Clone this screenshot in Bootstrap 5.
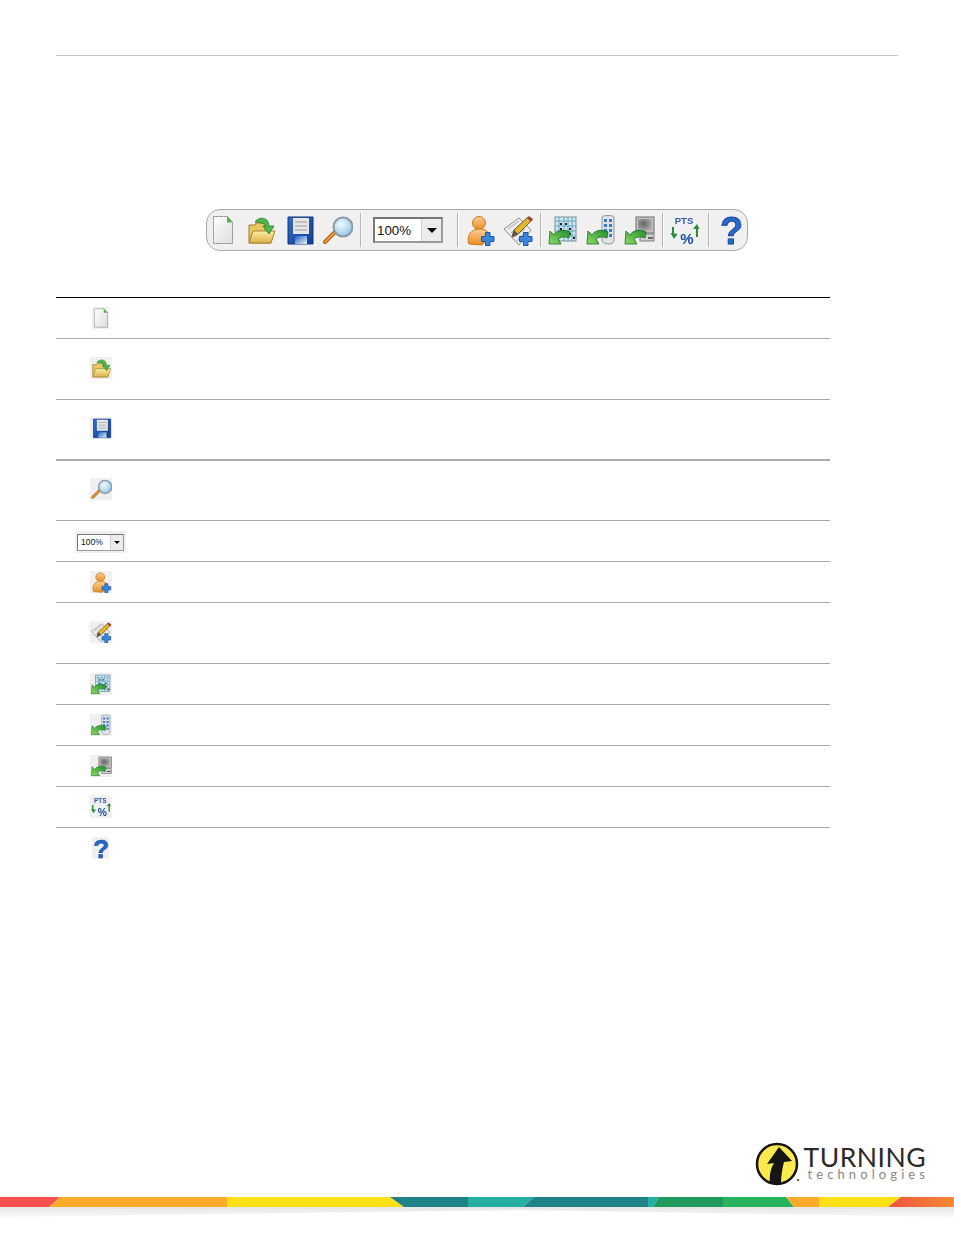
<!DOCTYPE html>
<html lang="en">
  <head>
    <meta charset="UTF-8" />
    <title>Toolbar reference</title>
    <link rel="stylesheet" href="https://cdn.jsdelivr.net/npm/bootstrap@5.3.0/dist/css/bootstrap.min.css" />
    <style>
      body { background: #fff; font-family: "Liberation Sans", Arial, sans-serif; height: 1235px; overflow: hidden; }
      .page-body { padding: 55px 56px 0; }
      .top-rule { height: 1px; background: #c4c4c4; margin: 0 0 153px; }
      .tool-strip { width: 542px; height: 42px; margin: 0 auto 46px 150px; background: #f0f0f0; border: 1px solid #a9a9a9; border-radius: 14px; gap: 6px; }
      .tool-strip svg { width: 32px; height: 32px; flex: none; filter: blur(.3px); }
      .tool-sep { width: 2px; height: 34px; background: #b4b4b4; border-right: 1px solid #fff; flex: none; margin: 0 -1px 0 1px; }
      .tool-sep-tight { margin-left: 0; }
      .zoom-box { display: flex; background: #fff; border: 2px solid #777; border-right-color: #9a9a9a; border-bottom-color: #9a9a9a; color: #111; }
      .zoom-box b { display: flex; align-items: center; justify-content: center; background: #ececec; border-left: 1px solid #d0d0d0; font-weight: 400; }
      .zoom-box b::after { content: ""; border: solid transparent; border-top-color: #000; border-bottom-width: 0; }
      .zoom-big { width: 71px; height: 26px; font-size: 13.3px; line-height: 24px; margin: 0 7px 0 6px; padding-left: 2px; justify-content: space-between; }
      .zoom-big b { width: 20px; }
      .zoom-big b::after { border-width: 5px 5px 0; }
      .zoom-small { width: 47px; height: 17px; font-size: 8.5px; line-height: 15px; padding-left: 3px; justify-content: space-between; border-width: 1px; }
      .zoom-small b { width: 13px; }
      .zoom-small b::after { border-width: 3px 3px 0; }
      .icon-table { width: 774px; margin: 0; border-top: 1px solid #000; }
      .icon-table td { padding: 0; border-bottom: 1px solid #a9a9a9; vertical-align: middle; text-align: center; }
      .icon-table tr:last-child td { border-bottom: 0; }
      .icon-col { width: 89px; }
      .row-s { height: 41px; }
      .row-t { height: 61px; }
      .row-m { height: 60px; }
      .row-thick td { border-bottom-width: 2px; }
      .icon-tile { display: inline-flex; vertical-align: middle; justify-content: center; overflow: hidden; background: #f0f0f0; width: 22px; height: 22px; margin-bottom: 1px; }
      .row-t .icon-tile, .row-m .icon-tile { margin-bottom: 3px; }
      .icon-tile svg { width: 22px; height: 22px; flex: none; filter: blur(.25px); }
      .tile-narrow { width: 17px; }
      .zoom-tile { display: inline-block; vertical-align: middle; background: #f0f0f0; padding: 3px 2px 2px; }
      .foot-area { position: absolute; left: 0; right: 0; bottom: 0; }
      .brand-row { padding-right: 28px; height: 46px; }
      .brand-row svg { filter: blur(.3px); }
      .brand-text { padding-bottom: 4px; }
      .brand-name { font-family: Lato, "Liberation Sans", sans-serif; font-weight: 400; font-size: 26.5px; line-height: 24px; color: #2a2a28; letter-spacing: .5px; }
      .brand-sub { font-family: Lato, "Liberation Sans", sans-serif; font-size: 13px; line-height: 10px; color: #8c8582; letter-spacing: 4.1px; margin-left: 4px; margin-right: -4px; white-space: nowrap; }
      .color-bar { display: block; width: 100%; height: 38px; margin-top: 10px; }
    </style>
  </head>
  <body>
    <svg width="0" height="0" class="position-absolute">
      <defs>
        <linearGradient id="paper" x1="0" y1="0" x2="1" y2="1"><stop offset="0" stop-color="#fff"/><stop offset="1" stop-color="#dcdcdc"/></linearGradient>
        <linearGradient id="tan" x1="0" y1="0" x2="0" y2="1"><stop offset="0" stop-color="#fdeea6"/><stop offset="1" stop-color="#dcb04c"/></linearGradient>
        <linearGradient id="navy" x1="0" y1="0" x2="1" y2="1"><stop offset="0" stop-color="#2f6fc4"/><stop offset="1" stop-color="#123c94"/></linearGradient>
        <linearGradient id="skin" x1="0" y1="0" x2="0" y2="1"><stop offset="0" stop-color="#fbcf96"/><stop offset="1" stop-color="#ec8a1e"/></linearGradient>
        <linearGradient id="leaf" x1="1" y1="0" x2="0" y2="1"><stop offset="0" stop-color="#1f8f2c"/><stop offset="1" stop-color="#8fdc63"/></linearGradient>
        <linearGradient id="shutter" x1="0" y1="0" x2="1" y2="1"><stop offset="0" stop-color="#1d62bd"/><stop offset="1" stop-color="#e8f2fb"/></linearGradient>
        <radialGradient id="screen" cx=".4" cy=".4" r=".7"><stop offset="0" stop-color="#666"/><stop offset="1" stop-color="#b4b4b4"/></radialGradient>
        <radialGradient id="lens" cx=".4" cy=".35" r=".7"><stop offset="0" stop-color="#f2fbff"/><stop offset="1" stop-color="#8cc6e4"/></radialGradient>
        <symbol id="i-green-arrow" viewBox="0 0 32 32">
          <path d="M2 30L3 17l4 4c3-5 10-6 16-3l-1 6c-5-2-9-1-11 1l3 5z" fill="url(#leaf)" stroke="#166b1e" stroke-width=".8"/>
        </symbol>
        <symbol id="i-plus" viewBox="0 0 32 32">
          <path d="M17.500 22.500h4v-4h4.500v4h4v5h-4v4h-4.500v-4h-4z" fill="#3b86dc" stroke="#1b56a6" stroke-width="1"/>
        </symbol>
        <symbol id="i-new" viewBox="0 0 32 32">
          <path d="M6.500 2.500h14l5 6v21h-19z" fill="url(#paper)" stroke="#8d8d8d" stroke-dasharray="2 .5"/>
          <path d="M20 2l6 6.500h-6z" fill="#57b14a"/>
        </symbol>
        <symbol id="i-open" viewBox="0 0 32 32">
          <path d="M4 29V11h6l1-2h9v8h6v12z" fill="#e8c765" stroke="#9f7d26"/>
          <path d="M4 29l4-12h22l-4 12z" fill="url(#tan)" stroke="#a88429"/>
          <path d="M10 8c3-5 11-5 13 0l1 4h5l-5 8-6-8h3c-1-3-7-4-11-4z" fill="#4cb84a" stroke="#1f7f28" stroke-width=".8"/>
        </symbol>
        <symbol id="i-save" viewBox="0 0 32 32">
          <path d="M5 3h25v27H5z" fill="url(#navy)" stroke="#12337f"/>
          <rect x="10" y="4" width="16" height="16" fill="#e6e6e6"/>
          <path d="M12 8h12M12 12h12M12 16h12" stroke="#9a9a9a"/>
          <rect x="12" y="22" width="12" height="8" fill="url(#shutter)"/>
        </symbol>
        <symbol id="i-find" viewBox="0 0 32 32">
          <path d="M4 28l11-11" stroke="#a85b14" stroke-width="4" stroke-linecap="round"/>
          <path d="M4 28l11-11" stroke="#ef9a3a" stroke-width="2" stroke-linecap="round"/>
          <circle cx="22" cy="13" r="9.500" fill="url(#lens)" stroke="#8b98a4" stroke-width="2"/>
        </symbol>
        <symbol id="i-user" viewBox="0 0 32 32">
          <circle cx="15" cy="9" r="6.500" fill="url(#skin)" stroke="#c67a1c"/>
          <path d="M5 30c-3-8 2-15 10-15s11 4 10 8l-7 8z" fill="url(#skin)" stroke="#c67a1c"/>
          <use href="#i-plus"/>
        </symbol>
        <symbol id="i-edit" viewBox="0 0 32 32">
          <path d="M2 15L17 4l12 12-12 15z" fill="#ededed" stroke="#8b8b8b"/>
          <path d="M6 15l11-8M9 19l11-8M12 23l11-8M15 27l8-9" stroke="#a8a8a8"/>
          <path d="M10 23l2-7L26 3l4 3-14 14z" fill="#e3b62d" stroke="#6f5a17"/>
          <path d="M10 23l2-7 4 4z" fill="#555"/>
          <path d="M25 4l2-2 4 3-2 3z" fill="#a2403c"/>
          <use href="#i-plus"/>
        </symbol>
        <symbol id="i-grid" viewBox="0 0 32 32">
          <rect x="8" y="3" width="21" height="24" fill="#cfe4ef" stroke="#7d8d96"/>
          <path d="M8 7h21M8 12h21M8 17h21M8 22h21M12 3v24M17 3v24M21 3v24M25 3v24" stroke="#4d9db8" stroke-width=".8"/>
          <path d="M13 9h2v2h-2zM18 9h2v2h-2zM22 14h2v2h-2zM13 14h2v2h-2zM22 19h2v2h-2zM26 23h2v2h-2z" fill="#222"/>
          <use href="#i-green-arrow"/>
        </symbol>
        <symbol id="i-handheld" viewBox="0 0 32 32">
          <path d="M17 3c0-2 12-2 12 0v24c-1 4-10 4-12 0z" fill="#dfe3e8" stroke="#8f969c"/>
          <path d="M19 5h3v3h-3zM24 5h3v3h-3zM19 10h3v3h-3zM24 10h3v3h-3zM19 15h3v3h-3zM24 15h3v3h-3zM24 20h3v3h-3z" fill="#3a77d0"/>
          <use href="#i-green-arrow"/>
        </symbol>
        <symbol id="i-pc" viewBox="0 0 32 32">
          <rect x="13" y="3" width="18" height="16" fill="#c4c4c4" stroke="#6c6c6c"/>
          <rect x="15" y="5" width="14" height="12" fill="url(#screen)"/>
          <rect x="17" y="20" width="14" height="7" fill="#d2d2d2" stroke="#7d7d7d"/>
          <path d="M25 24h5" stroke="#444" stroke-width="1.500"/>
          <use href="#i-green-arrow"/>
        </symbol>
        <symbol id="i-pts" viewBox="0 0 32 32">
          <text x="15" y="9.500" text-anchor="middle" font-family="Liberation Sans" font-weight="700" font-size="9.500" fill="#2a5aa8">PTS</text>
          <text x="18" y="29.500" text-anchor="middle" font-family="Liberation Sans" font-weight="700" font-size="15" fill="#1b4fa3">%</text>
          <path d="M4 13v8" fill="none" stroke="#2b8d35" stroke-width="2"/>
          <path d="M1.500 19l7 1-3.500 5z" fill="#2b8d35"/>
          <path d="M28 23v-8" fill="none" stroke="#2b8d35" stroke-width="2"/>
          <path d="M24 15l4-5 2.500 5z" fill="#2b8d35"/>
        </symbol>
        <symbol id="i-help" viewBox="0 0 32 32">
          <text x="16.500" y="30" text-anchor="middle" font-family="Liberation Sans" font-weight="700" font-size="38" fill="#2a68c8" stroke="#12409a" stroke-width=".8">?</text>
        </symbol>
      </defs>
    </svg>

    <div class="page-body">
      <div class="top-rule me-0"></div>

      <div class="tool-strip d-flex align-items-center">
        <svg><use href="#i-new"/></svg>
        <svg><use href="#i-open"/></svg>
        <svg><use href="#i-save"/></svg>
        <svg><use href="#i-find"/></svg>
        <span class="tool-sep"></span>
        <div class="zoom-box zoom-big">100%<b></b></div>
        <span class="tool-sep"></span>
        <svg><use href="#i-user"/></svg>
        <svg><use href="#i-edit"/></svg>
        <span class="tool-sep tool-sep-tight"></span>
        <svg><use href="#i-grid"/></svg>
        <svg><use href="#i-handheld"/></svg>
        <svg><use href="#i-pc"/></svg>
        <span class="tool-sep"></span>
        <svg><use href="#i-pts"/></svg>
        <span class="tool-sep"></span>
        <svg><use href="#i-help"/></svg>
      </div>

      <table class="icon-table">
        <tr class="row-s"><td class="icon-col"><span class="icon-tile tile-narrow"><svg><use href="#i-new"/></svg></span></td><td></td></tr>
        <tr class="row-t"><td><span class="icon-tile"><svg><use href="#i-open"/></svg></span></td><td></td></tr>
        <tr class="row-m row-thick"><td><span class="icon-tile"><svg><use href="#i-save"/></svg></span></td><td></td></tr>
        <tr class="row-t"><td><span class="icon-tile"><svg><use href="#i-find"/></svg></span></td><td></td></tr>
        <tr class="row-s"><td><span class="zoom-tile"><div class="zoom-box zoom-small">100%<b></b></div></span></td><td></td></tr>
        <tr class="row-s"><td><span class="icon-tile"><svg><use href="#i-user"/></svg></span></td><td></td></tr>
        <tr class="row-t"><td><span class="icon-tile"><svg><use href="#i-edit"/></svg></span></td><td></td></tr>
        <tr class="row-s"><td><span class="icon-tile"><svg><use href="#i-grid"/></svg></span></td><td></td></tr>
        <tr class="row-s"><td><span class="icon-tile"><svg><use href="#i-handheld"/></svg></span></td><td></td></tr>
        <tr class="row-s"><td><span class="icon-tile"><svg><use href="#i-pc"/></svg></span></td><td></td></tr>
        <tr class="row-s"><td><span class="icon-tile"><svg><use href="#i-pts"/></svg></span></td><td></td></tr>
        <tr class="row-s"><td><span class="icon-tile tile-narrow"><svg><use href="#i-help"/></svg></span></td><td></td></tr>
      </table>
    </div>

    <div class="foot-area">
      <div class="brand-row d-flex justify-content-end align-items-center gap-1">
        <svg width="46" height="46" viewBox="0 0 46 46">
          <circle cx="23" cy="23" r="20" fill="#fbe94e" stroke="#151515" stroke-width="2.500"/>
          <path d="M25 6l13 14-8 1c-2 7-3 15-3 21H16c-1-8 1-15 4-20l-7 1z" fill="#151515"/>
          <circle cx="44" cy="39" r="1.100" fill="#333"/>
        </svg>
        <div class="brand-text">
          <div class="brand-name">TURNING</div>
          <div class="brand-sub">technologies</div>
        </div>
      </div>
      <svg class="color-bar" viewBox="0 0 954 38" preserveAspectRatio="none">
        <defs>
          <linearGradient id="shade" x1="0" y1="0" x2="0" y2="1"><stop offset="0" stop-color="#e6e6e6"/><stop offset="1" stop-color="#f8f8f8"/></linearGradient>
          <linearGradient id="hot" x1="0" y1="0" x2="1" y2="0"><stop offset="0" stop-color="#f0533f"/><stop offset="1" stop-color="#f48a35"/></linearGradient>
        </defs>
        <path d="M0 10h954v10L520 13 0 20z" fill="url(#shade)"/>
        <path d="M0 0h60L49 10H0z" fill="#f5504d"/>
        <path d="M60 0h167v10H49z" fill="#fbab2b"/>
        <path d="M227 0h163l14 10H227z" fill="#fee016"/>
        <path d="M390 0h78v10h-64z" fill="#1f8289"/>
        <path d="M468 0h66l-11 10h-55z" fill="#23b0a3"/>
        <path d="M534 0h114v10H523z" fill="#1f8289"/>
        <path d="M648 0h11l-6 10h-5z" fill="#23b0a3"/>
        <path d="M659 0h64v10h-70z" fill="#1f9a5e"/>
        <path d="M723 0h63l8 10h-71z" fill="#25b35c"/>
        <path d="M786 0h33v10h-25z" fill="#fbab2b"/>
        <path d="M819 0h82l-13 10h-69z" fill="#fee016"/>
        <path d="M901 0h53v10h-66z" fill="url(#hot)"/>
      </svg>
    </div>
  </body>
</html>
